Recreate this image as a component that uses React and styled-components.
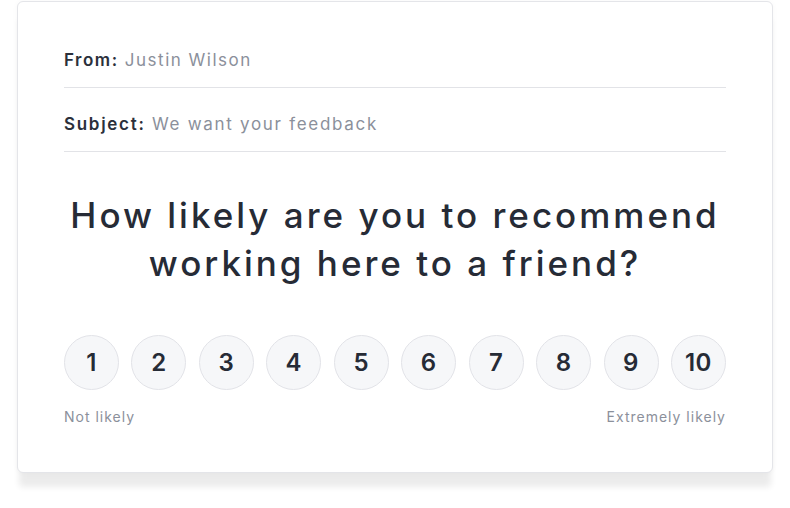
import styled, { createGlobalStyle } from "styled-components";

const GlobalStyle = createGlobalStyle`
    html, body {
        margin: 0;
        padding: 0;
        background: #ffffff;
    }
    body {
        font-family: Inter, "Noto Sans", sans-serif;
        -webkit-font-smoothing: antialiased;
    }
`;

const Page = styled.div`
    padding: 1px 17px 0;
    width: 790px;
    height: 508px;
    box-sizing: border-box;
`;

const Card = styled.div`
    width: 756px;
    height: 472px;
    box-sizing: border-box;
    background: #ffffff;
    border: 1px solid #e4e5e9;
    border-radius: 6px;
    box-shadow: 0 16px 6px -2px rgba(0, 0, 0, 0.08), 0 0 6px rgba(0, 0, 0, 0.03);
    padding: 22px 46px 0;
`;

const HeaderRow = styled.div`
    padding: 24px 0 15px;
    line-height: 24px;
    font-size: 17px;
    letter-spacing: ${props => props.spacing || '1.5px'};
    border-bottom: 1px solid #e2e3e7;
    color: #8b909b;
`;

const Label = styled.span`
    color: #2b303b;
    font-weight: 600;
`;

const Question = styled.h1`
    margin: 39px 0 0;
    text-align: center;
    font-size: 35px;
    line-height: 48px;
    font-weight: 500;
    color: #262b36;
    letter-spacing: 3px;
`;

const Scale = styled.div`
    margin-top: 48px;
    display: flex;
    justify-content: space-between;
`;

const Circle = styled.div`
    width: 55px;
    height: 55px;
    box-sizing: border-box;
    border-radius: 50%;
    border: 1px solid #e2e3e8;
    background: #f6f7f9;
    display: flex;
    align-items: center;
    justify-content: center;
    font-size: 24px;
    font-weight: 600;
    letter-spacing: 0.5px;
    color: #262b36;
`;

const Hints = styled.div`
    margin-top: 17px;
    display: flex;
    justify-content: space-between;
    font-size: 14px;
    line-height: 20px;
    letter-spacing: 1px;
    color: #8b909b;
`;

export default function App() {
    const scores = [1, 2, 3, 4, 5, 6, 7, 8, 9, 10];

    return (
        <Page>
            <GlobalStyle />
            <Card>
                <HeaderRow spacing="1.5px"><Label>From:</Label> Justin Wilson</HeaderRow>
                <HeaderRow spacing="1.7px"><Label>Subject:</Label> We want your feedback</HeaderRow>
                <Question>
                    How likely are you to recommend<br />
                    working here to a friend?
                </Question>
                <Scale>
                    {scores.map((n) => (
                        <Circle key={n}>{n}</Circle>
                    ))}
                </Scale>
                <Hints>
                    <span>Not likely</span>
                    <span>Extremely likely</span>
                </Hints>
            </Card>
        </Page>
    );
}
